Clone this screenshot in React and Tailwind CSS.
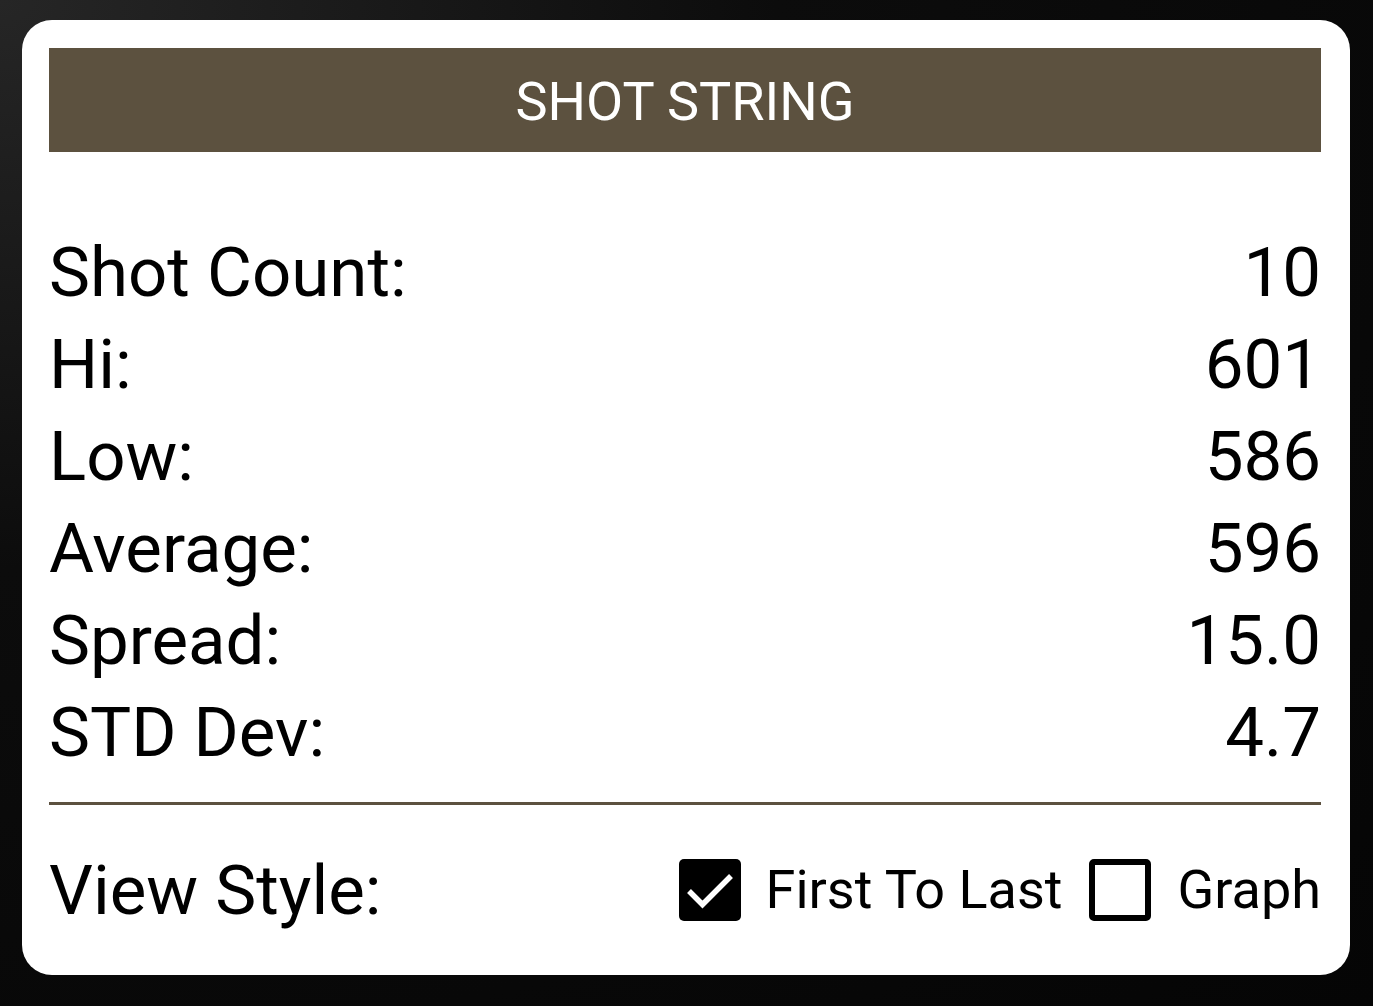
const stats = [
  { label: 'Shot Count:', value: '10' },
  { label: 'Hi:', value: '601' },
  { label: 'Low:', value: '586' },
  { label: 'Average:', value: '596' },
  { label: 'Spread:', value: '15.0' },
  { label: 'STD Dev:', value: '4.7' },
]

function CheckBox({ checked }) {
  if (checked) {
    return (
      <span className="block h-[62px] w-[62px] rounded-[5px] bg-black">
        <svg width="62" height="62" viewBox="0 0 62 62" fill="none">
          <path d="M10 32l13.5 13.5L52 17" stroke="white" strokeWidth="5.5" strokeLinecap="butt" strokeLinejoin="miter" />
        </svg>
      </span>
    )
  }
  return <span className="block h-[62px] w-[62px] rounded-[5px] border-[6px] border-black" />
}

export default function App() {
  return (
    <div
      className="min-h-screen w-full bg-[#0b0b0b] bg-[radial-gradient(ellipse_at_top_left,#262626_0%,#0c0c0c_40%,#050505_100%)] pt-[20px] pl-[22px]"
      style={{ fontFamily: 'Roboto, "Noto Sans", sans-serif' }}
    >
      <div className="flex h-[955px] w-[1328px] flex-col rounded-[30px] bg-white pl-[27px] pr-[29px] pt-[28px]">
        <div className="flex h-[104px] items-center justify-center bg-[#5c513f] pt-[4px]">
          <h1 className="text-[54px] leading-none text-white">SHOT STRING</h1>
        </div>

        <div className="mt-[74px] flex flex-col">
          {stats.map((s) => (
            <div key={s.label} className="flex h-[92px] items-center justify-between text-[69px] leading-none text-black">
              <span>{s.label}</span>
              <span>{s.value}</span>
            </div>
          ))}
        </div>

        <div className="mt-[24px] h-[3px] bg-[#5c513f]" />

        <div className="flex h-[170px] items-center justify-between">
          <span className="text-[69px] leading-none text-black">View Style:</span>
          <div className="flex items-center">
            <CheckBox checked />
            <span className="ml-[25px] text-[54px] leading-none text-black">First To Last</span>
            <span className="ml-[26px]"><CheckBox /></span>
            <span className="ml-[27px] text-[54px] leading-none text-black">Graph</span>
          </div>
        </div>
      </div>
    </div>
  )
}
